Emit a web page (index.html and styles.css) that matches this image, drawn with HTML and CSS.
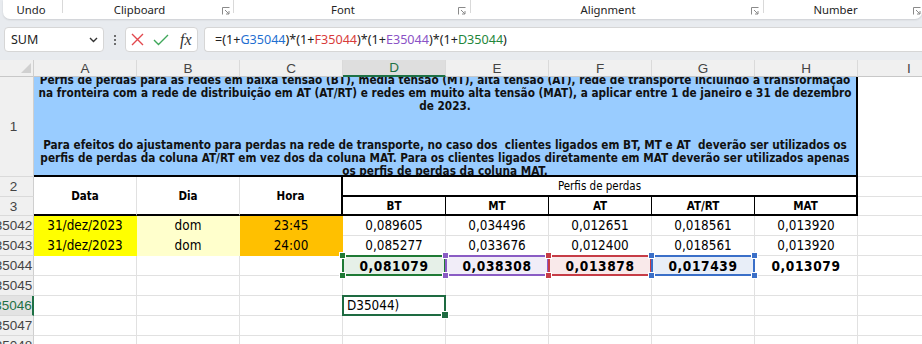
FILE: index.html
```html
<!DOCTYPE html>
<html lang="pt">
<head>
    <meta charset="UTF-8">
    <title>Perfis de perdas</title>
    <link rel="stylesheet" href="styles.css">
</head>
<body>
    <div class="ribbon">
        <div class="group g-undo"><span class="label">Undo</span></div>
        <span class="sep"></span>
        <div class="group g-clip"><span class="label">Clipboard</span>
            <svg class="launcher" viewBox="0 0 8 8"><path d="M0.5 7.5V0.5H7.5M3 3L7 7M4 7H7V4" fill="none" stroke="#8a8a8a"/></svg></div>
        <span class="sep"></span>
        <div class="group g-font"><span class="label">Font</span>
            <svg class="launcher" viewBox="0 0 8 8"><path d="M0.5 7.5V0.5H7.5M3 3L7 7M4 7H7V4" fill="none" stroke="#8a8a8a"/></svg></div>
        <span class="sep"></span>
        <div class="group g-align"><span class="label">Alignment</span>
            <svg class="launcher" viewBox="0 0 8 8"><path d="M0.5 7.5V0.5H7.5M3 3L7 7M4 7H7V4" fill="none" stroke="#8a8a8a"/></svg></div>
        <span class="sep"></span>
        <div class="group g-num"><span class="label">Number</span>
            <svg class="launcher" viewBox="0 0 8 8"><path d="M0.5 7.5V0.5H7.5M3 3L7 7M4 7H7V4" fill="none" stroke="#8a8a8a"/></svg></div>
    </div>

    <div class="formula-bar">
        <div class="namebox">
            <span>SUM</span>
            <svg width="9" height="6" viewBox="0 0 9 6"><path d="M1 1l3.5 3.5L8 1" fill="none" stroke="#333" stroke-width="1.4"/></svg>
        </div>
        <div class="dots"><i></i><i></i><i></i></div>
        <div class="fx-buttons">
            <svg width="13" height="13" viewBox="0 0 13 13"><path d="M1 1l11 11M12 1L1 12" stroke="#e2484d" stroke-width="1.4"/></svg>
            <svg width="16" height="12" viewBox="0 0 16 12"><path d="M1 6l4.5 4.5L15 1" fill="none" stroke="#3fa75a" stroke-width="1.4"/></svg>
            <span class="fx">fx</span>
        </div>
        <div class="formula">=(1+<span class="t-g">G35044</span>)*(1+<span class="t-f">F35044</span>)*(1+<span class="t-e">E35044</span>)*(1+<span class="t-d">D35044</span>)</div>
    </div>

    <div class="sheet">
        <div class="corner"></div>
        <div class="colhead">A</div>
        <div class="colhead">B</div>
        <div class="colhead">C</div>
        <div class="colhead active">D</div>
        <div class="colhead">E</div>
        <div class="colhead">F</div>
        <div class="colhead">G</div>
        <div class="colhead">H</div>
        <div class="colhead">I</div>

        <div class="rowhead">1</div>
        <div class="c intro"><div>Perfis de perdas para as redes em baixa tensão (BT), média tensão (MT), alta tensão (AT), rede de transporte incluindo a transformação<br>na fronteira com a rede de distribuição em AT (AT/RT) e redes em muito alta tensão (MAT), a aplicar entre 1 de janeiro e 31 de dezembro<br>de 2023.<br><br><br>Para efeitos do ajustamento para perdas na rede de transporte, no caso dos&nbsp; clientes ligados em BT, MT e AT&nbsp; deverão ser utilizados os<br>perfis de perdas da coluna AT/RT em vez dos da coluna MAT. Para os clientes ligados diretamente em MAT deverão ser utilizados apenas<br>os perfis de perdas da coluna MAT.</div></div>
        <div class="c"></div>

        <div class="rowhead">2</div>
        <div class="c hdr span2">Data</div>
        <div class="c hdr span2">Dia</div>
        <div class="c hdr span2 thick-r">Hora</div>
        <div class="c group-head">Perfis de perdas</div>
        <div class="c"></div>

        <div class="rowhead">3</div>
        <div class="c hdr sub">BT</div>
        <div class="c hdr sub">MT</div>
        <div class="c hdr sub">AT</div>
        <div class="c hdr sub">AT/RT</div>
        <div class="c hdr sub last">MAT</div>
        <div class="c"></div>

        <div class="rowhead">35042</div>
        <div class="c yel">31/dez/2023</div>
        <div class="c ltyel">dom</div>
        <div class="c orange">23:45</div>
        <div class="c">0,089605</div>
        <div class="c">0,034496</div>
        <div class="c">0,012651</div>
        <div class="c">0,018561</div>
        <div class="c">0,013920</div>
        <div class="c"></div>

        <div class="rowhead">35043</div>
        <div class="c yel">31/dez/2023</div>
        <div class="c ltyel">dom</div>
        <div class="c orange">24:00</div>
        <div class="c">0,085277</div>
        <div class="c">0,033676</div>
        <div class="c">0,012400</div>
        <div class="c">0,018561</div>
        <div class="c">0,013920</div>
        <div class="c"></div>

        <div class="rowhead">35044</div>
        <div class="c"></div>
        <div class="c"></div>
        <div class="c"></div>
        <div class="c b ref ref-d">0,081079</div>
        <div class="c b ref ref-e">0,038308</div>
        <div class="c b ref ref-f">0,013878</div>
        <div class="c b ref ref-g">0,017439</div>
        <div class="c b">0,013079</div>
        <div class="c"></div>

        <div class="rowhead">35045</div>
        <div class="c"></div><div class="c"></div><div class="c"></div><div class="c"></div><div class="c"></div><div class="c"></div><div class="c"></div><div class="c"></div><div class="c"></div>

        <div class="rowhead active">35046</div>
        <div class="c"></div><div class="c"></div><div class="c"></div>
        <div class="c edit">D35044)</div>
        <div class="c"></div><div class="c"></div><div class="c"></div><div class="c"></div><div class="c"></div>

        <div class="rowhead">35047</div>
        <div class="c"></div><div class="c"></div><div class="c"></div><div class="c"></div><div class="c"></div><div class="c"></div><div class="c"></div><div class="c"></div><div class="c"></div>

        <div class="rowhead">35048</div>
        <div class="c"></div><div class="c"></div><div class="c"></div><div class="c"></div><div class="c"></div><div class="c"></div><div class="c"></div><div class="c"></div><div class="c"></div>
    </div>
</body>
</html>
```

FILE: styles.css
```css
* {
    box-sizing: border-box;
}

body {
    margin: 0;
    width: 922px;
    height: 344px;
    overflow: hidden;
    background: #e8ebef;
    font-family: "Noto Sans", sans-serif;
}

/* ribbon group labels */
.ribbon {
    display: flex;
    height: 19px;
    margin-left: 3px;
    background: #fff;
    border-radius: 0 0 7px 7px;
    box-shadow: 0 1px 2px rgba(0, 0, 0, 0.12);
    font-size: 11.3px;
    color: #242424;
}

.group {
    display: flex;
    align-items: center;
    padding-right: 3px;
}

.group .label {
    flex: 1;
    text-align: center;
    padding-right: 6px;
    line-height: 19px;
}

.g-undo { width: 59px; }
.g-undo .label { padding-right: 0; }
.g-clip { width: 170px; }
.g-font { width: 236px; padding-right: 4px; }
.g-align { width: 292px; padding-right: 4px; }
.g-num { flex: 1; padding-right: 1px; }

.sep {
    width: 1px;
    height: 13px;
    background: #d9d9d9;
}

.launcher {
    width: 8px;
    height: 8px;
    margin-top: 2px;
}

/* formula bar */
.formula-bar {
    display: flex;
    height: 25px;
    margin-top: 8px;
}

.namebox {
    margin-left: 4px;
    width: 100px;
    background: #fff;
    border: 1px solid #d6d6d6;
    border-radius: 4px;
    display: flex;
    align-items: center;
    justify-content: space-between;
    padding: 0 5px 0 6px;
    font-size: 12.5px;
    color: #222;
}

.dots {
    width: 2px;
    margin: 0 9px 0 10px;
    display: flex;
    flex-direction: column;
    justify-content: center;
    gap: 2px;
}

.dots i {
    width: 2px;
    height: 2px;
    background: #444;
    border-radius: 1px;
}

.fx-buttons {
    width: 73px;
    background: #fff;
    border: 1px solid #d6d6d6;
    border-radius: 4px;
    display: flex;
    align-items: center;
    padding-left: 5px;
    gap: 9px;
}

.fx {
    font-family: "Liberation Serif", serif;
    font-style: italic;
    font-size: 16px;
    color: #333;
    margin-left: 2px;
}

.formula {
    flex: 1;
    margin-left: 6px;
    background: #fff;
    border: 1px solid #d6d6d6;
    border-right: 0;
    border-radius: 4px 0 0 4px;
    padding-left: 10px;
    display: flex;
    align-items: center;
    font-size: 12.6px;
    color: #222;
    white-space: nowrap;
}

.t-g { color: #1f6fd1; }
.t-f { color: #d83b3b; }
.t-e { color: #8a52c6; }
.t-d { color: #23863a; }

/* sheet */
.sheet {
    margin-top: 8px;
    width: 922px;
    height: 284px;
    overflow: hidden;
    display: grid;
    grid-template-columns: 34px repeat(9, 103px);
    grid-template-rows: 17px 100px 20px 19px repeat(7, 20px);
    background: #fff;
    font-family: "DejaVu Sans Condensed", "DejaVu Sans", sans-serif;
    font-stretch: condensed;
}

.corner {
    position: relative;
    background: #f0f0f0;
    border-right: 1px solid #cfcfcf;
    border-bottom: 1px solid #c8c8c8;
}

.corner::after {
    content: '';
    position: absolute;
    right: 2px;
    bottom: 3px;
    border-left: 10px solid transparent;
    border-bottom: 10px solid #d0d0d0;
}

.colhead, .rowhead {
    background: #f0f0f0;
    display: flex;
    align-items: center;
    justify-content: center;
    font-family: "Liberation Sans", sans-serif;
    font-size: 13.5px;
    color: #444;
    white-space: nowrap;
    overflow: hidden;
}

.colhead {
    border-right: 1px solid #dadada;
    border-bottom: 1px solid #c8c8c8;
}

.colhead.active {
    background: #dedede;
    color: #1e7145;
    border-bottom: 2px solid #1e7145;
}

.rowhead {
    padding-right: 6px;
    border-right: 1px solid #cfcfcf;
    border-bottom: 1px solid #dadada;
}

.rowhead.active {
    background: #e3e3e3;
    color: #1e7145;
    border-right: 2px solid #1e7145;
}

.c {
    border-right: 1px solid #e1e1e1;
    border-bottom: 1px solid #e1e1e1;
    display: flex;
    align-items: center;
    justify-content: center;
    font-size: 13.4px;
    color: #000;
    white-space: nowrap;
}

.intro {
    grid-column: span 8;
    background: #99ccff;
    border-right: 2px solid #000;
    border-bottom: 2px solid #000;
    font-size: 11.7px;
    font-weight: bold;
    line-height: 13.1px;
    text-align: center;
    overflow: hidden;
    color: #111;
}

.hdr {
    font-size: 11.5px;
    font-weight: bold;
}

.span2 {
    grid-row: span 2;
    border-bottom: 2px solid #000;
}

.thick-r {
    border-right: 2px solid #000;
}

.group-head {
    grid-column: span 5;
    font-size: 11.5px;
    border-right: 2px solid #000;
    border-bottom: 2px solid #000;
}

.sub {
    border-right: 1px solid #000;
    border-bottom: 2px solid #000;
}

.sub.last {
    border-right: 2px solid #000;
}

.yel { background: #ffff00; border-color: #ffff00; }
.ltyel { background: #ffffcc; border-color: #ffffcc; }
.orange { background: #ffc000; border-color: #ffc000; }

.b {
    font-weight: bold;
    font-size: 13.6px;
    letter-spacing: 0.6px;
}

/* formula reference boxes */
.ref {
    position: relative;
}

.ref::before {
    content: '';
    position: absolute;
    left: -1px;
    top: -1px;
    right: -1px;
    bottom: -1px;
    border: 2px solid var(--c);
}

.ref::after {
    content: '';
    position: absolute;
    left: -4px;
    top: -4px;
    right: -4px;
    bottom: -4px;
    background:
        linear-gradient(var(--c), var(--c)) left 1px top 1px / 5px 5px no-repeat,
        linear-gradient(var(--c), var(--c)) right 1px top 1px / 5px 5px no-repeat,
        linear-gradient(var(--c), var(--c)) left 1px bottom 1px / 5px 5px no-repeat,
        linear-gradient(var(--c), var(--c)) right 1px bottom 1px / 5px 5px no-repeat,
        linear-gradient(#fff, #fff) left top / 7px 7px no-repeat,
        linear-gradient(#fff, #fff) right top / 7px 7px no-repeat,
        linear-gradient(#fff, #fff) left bottom / 7px 7px no-repeat,
        linear-gradient(#fff, #fff) right bottom / 7px 7px no-repeat;
}

.ref-d { --c: #1f7a35; background: #e6f0e8; }
.ref-e { --c: #8a5cc4; background: #f1edf8; }
.ref-f { --c: #c63c46; background: #f9e9ea; }
.ref-g { --c: #3a6fc8; background: #e8eef8; }

.edit {
    position: relative;
    justify-content: flex-start;
    padding-left: 4px;
}

.edit::before {
    content: '';
    position: absolute;
    left: -1px;
    top: -1px;
    right: -1px;
    bottom: -1px;
    border: 2px solid #1e6b41;
}

.edit::after {
    content: '';
    position: absolute;
    right: -4px;
    bottom: -4px;
    width: 6px;
    height: 6px;
    background: #1e6b41;
    border: 1px solid #fff;
}
```
